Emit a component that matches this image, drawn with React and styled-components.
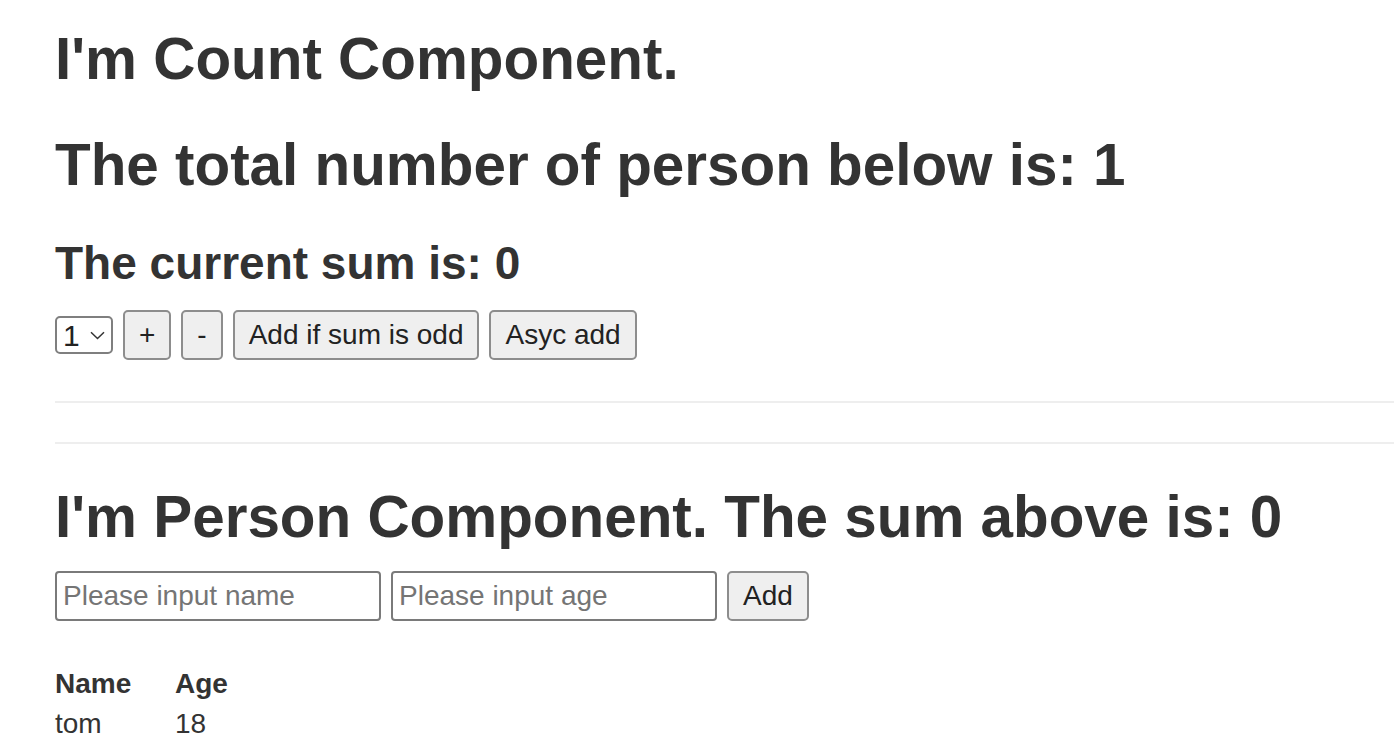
import React from "react";
import styled, { createGlobalStyle } from "styled-components";

const Global = createGlobalStyle`
  html, body { margin: 0; padding: 0; background: #fff; overflow: hidden; }
  body { font-family: "Liberation Sans", Arial, Helvetica, sans-serif; color: #333; font-size: 28px; line-height: 40px; }
`;

const Page = styled.div`
  display: flex;
  flex-direction: column;
  padding: 26px 0 0 55px;
`;

const Heading = styled.h2`
  margin: ${(p) => p.$mt || 0}px 0 0;
  font-size: 58.4px;
  line-height: 66px;
  font-weight: 700;
  color: #333;
  white-space: nowrap;
`;

const SubHeading = styled.h3`
  margin: ${(p) => p.$mt || 0}px 0 0;
  font-size: 46px;
  line-height: 53px;
  font-weight: 700;
  color: #333;
`;

const Row = styled.div`
  display: flex;
  align-items: center;
  gap: 10px;
  margin-top: ${(p) => p.$mt || 0}px;
`;

const Button = styled.button`
  box-sizing: border-box;
  height: 50px;
  padding: 0 14px;
  font-family: "Liberation Sans", Arial, sans-serif;
  font-size: 28px;
  color: #222;
  background: #efefef;
  border: 2px solid #8d8d8d;
  border-radius: 5px;
`;

const SelectBox = styled.div`
  box-sizing: border-box;
  display: flex;
  align-items: center;
  height: 38px;
  width: 58px;
  border: 2px solid #7f7f7f;
  border-radius: 5px;
  padding: 0 5px 0 6px;
  gap: 9px;
`;

const Select = styled.select`
  appearance: none;
  -webkit-appearance: none;
  border: none;
  background: transparent;
  font-family: "Liberation Sans", Arial, sans-serif;
  font-size: 30px;
  color: #222;
  padding: 0;
  outline: none;
  width: 18px;
`;

const Rule = styled.hr`
  margin: ${(p) => p.$mt || 0}px 0 0;
  border: none;
  border-top: 2px solid #eee;
  height: 0;
  width: 100%;
`;

const Input = styled.input`
  box-sizing: border-box;
  width: 326px;
  height: 50px;
  padding: 0 6px;
  font-family: "Liberation Sans", Arial, sans-serif;
  font-size: 28px;
  color: #222;
  border: 2px solid #7a7a7a;
  border-radius: 4px;
  background: #fff;
  &::placeholder { color: #757575; }
`;

const Table = styled.table`
  margin-top: 43px;
  border-collapse: collapse;
  font-size: 28px;
  line-height: 40px;
`;

const Th = styled.th`
  text-align: left;
  font-weight: 700;
  padding: 0;
  width: ${(p) => p.$w || "auto"};
`;

const Td = styled.td`
  padding: 0;
`;

export default function App() {
  return (
    <>
      <Global />
      <Page>
        <Heading>I'm Count Component.</Heading>
        <Heading $mt={40}>The total number of person below is: 1</Heading>
        <SubHeading $mt={39}>The current sum is: 0</SubHeading>
        <Row $mt={20}>
          <SelectBox>
            <Select defaultValue="1">
              <option value="1">1</option>
              <option value="2">2</option>
              <option value="3">3</option>
            </Select>
            <svg width="15" height="9" viewBox="0 0 15 9">
              <path d="M1 1.3 L7.5 7.5 L14 1.3" fill="none" stroke="#333" strokeWidth="1.5" />
            </svg>
          </SelectBox>
          <Button>+</Button>
          <Button>-</Button>
          <Button>Add if sum is odd</Button>
          <Button>Asyc add</Button>
        </Row>
        <Rule $mt={41} />
        <Rule $mt={39} />
        <Heading $mt={40}>I'm Person Component. The sum above is: 0</Heading>
        <Row $mt={21}>
          <Input placeholder="Please input name" />
          <Input placeholder="Please input age" />
          <Button>Add</Button>
        </Row>
        <Table>
          <thead>
            <tr>
              <Th $w="120px">Name</Th>
              <Th>Age</Th>
            </tr>
          </thead>
          <tbody>
            <tr>
              <Td>tom</Td>
              <Td>18</Td>
            </tr>
          </tbody>
        </Table>
      </Page>
    </>
  );
}
